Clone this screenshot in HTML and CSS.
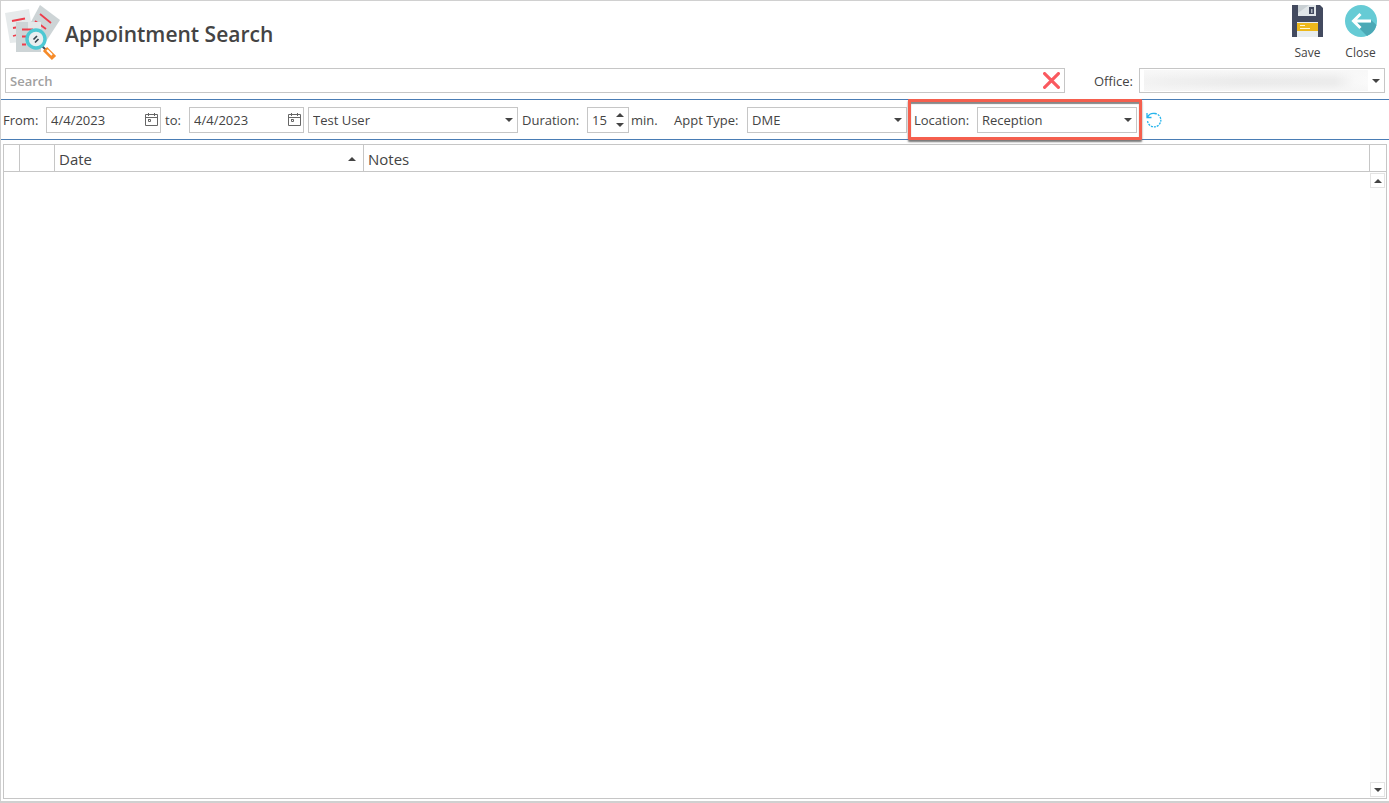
FILE: index.html
```html
<!DOCTYPE html>
<html lang="en">
<head>
<meta charset="utf-8">
<title>Appointment Search</title>
<link rel="stylesheet" href="styles.css">
</head>
<body>
<main class="window">
  <header class="header">
    <svg class="logo" viewBox="0 0 56 56" aria-hidden="true">
      <path fill="#e6eaeb" d="M0 8 24 4 29 36 5 38Z"/>
      <path fill="#cdd4d6" d="M35 0 55 15 38 41 20 28Z"/>
      <g stroke="#ee3d4b" stroke-width="1.8" fill="none">
        <path d="M7 16 20 13.500M8 23 14 22M8 31 12 30M35 9 46 18M30 16 41 24"/>
      </g>
      <path fill="#cdd4d6" d="M11 17H36V47H11Z"/>
      <path fill="#e3e7e8" d="M23 17H36V30H23Z"/>
      <path stroke="#ee3d4b" stroke-width="1.8" d="M17 24.500H28M17 31.500H23M17 39.500H21"/>
      <path stroke="#47525c" stroke-width="2" d="M37 41 42 46"/>
      <path stroke="#f68b29" stroke-width="6" d="M40 44 49 53"/>
      <path stroke="#fff" stroke-width="2" d="M42 45 47 50"/>
      <circle cx="31" cy="34" r="9" fill="#e9eff0" stroke="#4dc8d3" stroke-width="3.4"/>
      <path stroke="#35434d" stroke-width="1.7" d="M28.500 34.500 32 31M30 37.500 33.500 34"/>
    </svg>
    <h1 class="title">Appointment Search</h1>
    <button class="tool" type="button">
      <svg class="tool-icon" viewBox="0 0 32 32" aria-hidden="true">
        <path fill="#434a5f" d="M0 0H28L31 3V32H0Z"/>
        <path fill="#e1e6e9" d="M6 0H24V11H6Z"/>
        <path fill="#c9d0d4" d="M6 0H17L6 8Z"/>
        <path fill="#434a5f" d="M17 2H22V9H17Z"/>
        <path fill="#aeb6bf" d="M19 4H20.500V8H19Z"/>
        <path fill="#e8edef" d="M5 17H26V32H5Z"/>
        <path fill="#edb81b" d="M5 18H26V26H5Z"/>
        <path stroke="#fff7d5" d="M8 20.500H13M8 23.500H18"/>
      </svg>
      <span>Save</span>
    </button>
    <button class="tool" type="button">
      <svg class="tool-icon" viewBox="0 0 32 32" aria-hidden="true">
        <circle cx="16" cy="16" r="16" fill="#66cbd5"/>
        <path fill="#4ba9b6" d="M14 23 22 31A16 16 0 0 0 31.500 20L26 15 25 17.500H12Z"/>
        <path fill="none" stroke="#fff" stroke-width="3" d="M26 16H9M15.500 9 8.500 16 15.500 23"/>
      </svg>
      <span>Close</span>
    </button>
  </header>

  <div class="search-row">
    <div class="field search">
      <input class="text search-text" type="text" placeholder="Search" aria-label="Search">
      <button class="icon-button clear" type="button" aria-label="Clear search">
        <svg class="clear-icon" viewBox="0 0 16 16"><path d="M1.500 1.500 14.500 14.500M14.500 1.500 1.500 14.500" stroke="#fa595f" stroke-width="3" stroke-linecap="round"/></svg>
      </button>
    </div>
    <label class="office-label" for="office">Office:</label>
    <div class="field combo office">
      <select class="select" id="office"><option></option></select>
      <span class="redacted"></span>
    </div>
  </div>

  <div class="filters">
    <label class="from-label" for="from">From:</label>
    <div class="field date">
      <input class="text" id="from" type="text" value="4/4/2023">
      <button class="icon-button" type="button" aria-label="Pick start date">
        <svg class="calendar" viewBox="0 0 13 13"><path fill="none" stroke="#666" d="M.5 1.500H12.500V12.500H.5ZM1 4.500H12M3.500 0V3M9.500 0V3M3 6.500H5.500V8.500H3.500V7"/></svg>
      </button>
    </div>
    <label class="to-label" for="to">to:</label>
    <div class="field date">
      <input class="text" id="to" type="text" value="4/4/2023">
      <button class="icon-button" type="button" aria-label="Pick end date">
        <svg class="calendar" viewBox="0 0 13 13"><path fill="none" stroke="#666" d="M.5 1.500H12.500V12.500H.5ZM1 4.500H12M3.500 0V3M9.500 0V3M3 6.500H5.500V8.500H3.500V7"/></svg>
      </button>
    </div>
    <div class="field combo user">
      <select class="select" aria-label="User"><option>Test User</option></select>
    </div>
    <label class="duration-label" for="duration">Duration:</label>
    <div class="field spin">
      <input class="text" id="duration" type="text" value="15">
      <div class="steps">
        <button class="step up" type="button" aria-label="Increase"></button>
        <button class="step down" type="button" aria-label="Decrease"></button>
      </div>
    </div>
    <span class="unit">min.</span>
    <label class="type-label" for="type">Appt Type:</label>
    <div class="field combo type">
      <select class="select" id="type"><option>DME</option></select>
    </div>
    <div class="location">
      <label class="location-label" for="location">Location:</label>
      <div class="field combo type">
        <select class="select" id="location"><option>Reception</option></select>
      </div>
    </div>
    <button class="icon-button refresh-button" type="button" aria-label="Refresh">
      <svg class="refresh" viewBox="0 0 16 16"><g fill="none" stroke="#25b4ec" stroke-width="1.300"><path d="M1 1V5.500H5.500M1.500 5A7 7 0 0 1 9 1.500"/><path stroke-dasharray="2 1" d="M9 1.500A6.700 6.700 0 1 1 1.500 9"/></g></svg>
    </button>
  </div>

  <section class="results">
    <table class="grid">
      <thead>
        <tr>
          <th class="col-marker"></th>
          <th class="col-icon"></th>
          <th class="col-date" aria-sort="ascending"><div class="sortable">Date<span class="up"></span></div></th>
          <th>Notes</th>
          <th class="col-scroll"></th>
        </tr>
      </thead>
    </table>
    <div class="scrollbar">
      <button class="scroll-button up" type="button" aria-label="Scroll up"></button>
      <button class="scroll-button down" type="button" aria-label="Scroll down"></button>
    </div>
  </section>
</main>
</body>
</html>
```

FILE: styles.css
```css
* { box-sizing: border-box; }

body {
  margin: 0;
  background: #fff;
  color: #444;
  font: 13px/20px "Open Sans", "Noto Sans", sans-serif;
}

button, input, select {
  margin: 0;
  padding: 0;
  border: 0;
  background: none;
  color: inherit;
  font: inherit;
}

svg { display: block; }

.window {
  display: flex;
  flex-direction: column;
  height: 100vh;
  border: 1px solid #d0d0d0;
  border-width: 1px 0 2px 1px;
}

.header {
  display: flex;
  align-items: flex-start;
  height: 67px;
  padding: 4px 2px 0 4px;
}

.logo { width: 56px; height: 56px; }

.title {
  flex: 1;
  margin: 14px 0 0 4px;
  font-size: 21px;
  line-height: 30px;
  font-weight: 600;
}

.tool {
  display: flex;
  flex-direction: column;
  align-items: center;
  gap: 6px;
  width: 53px;
  font-size: 12px;
}

.tool-icon { width: 32px; height: 32px; }

.search-row {
  display: flex;
  align-items: center;
  padding: 0 4px;
}

.field {
  display: flex;
  align-items: center;
  height: 26px;
  border: 1px solid #c6c6c6;
  background: #fff;
}

.text {
  flex: 1;
  min-width: 0;
  height: 24px;
  padding-left: 4px;
}

.search { flex: 1; height: 25px; }
.search-text { font-weight: 600; }
.search-text::placeholder { color: #a0a0a0; opacity: 1; }
.icon-button { padding: 0 2px; }
.clear { padding: 0 4px; }
.clear-icon { width: 17px; height: 17px; }
.office-label { width: 74px; padding-right: 6px; text-align: right; }
.office { width: 246px; height: 25px; }

.combo { position: relative; }

.select {
  width: 100%;
  height: 24px;
  padding: 0 20px 0 4px;
  appearance: none;
}

.combo::after {
  content: "";
  position: absolute;
  top: 10px;
  right: 4px;
  border: 4px solid transparent;
  border-top-color: #444;
  border-bottom: 0;
  pointer-events: none;
}

.redacted {
  position: absolute;
  inset: 1px 16px 1px 4px;
  background:
    linear-gradient(#f8f8f8, transparent 45%, transparent 65%, #f6f6f6),
    linear-gradient(90deg, #f3f3f3, #f0f0f0 12%, #ebebeb 45%, #ececec 85%, #f8f8f8 94%, #fafafa);
  pointer-events: none;
}

.filters {
  display: flex;
  align-items: center;
  height: 41px;
  margin-top: 6px;
  padding-left: 2px;
  border: 1px solid #4a7db5;
  border-width: 1px 0;
}

.from-label { width: 43px; }
.date { width: 115px; }
.calendar { width: 13px; height: 13px; }
.to-label { width: 28px; padding-left: 4px; }
.user { width: 210px; margin-left: 4px; }
.duration-label { width: 69px; padding-left: 4px; }
.spin { width: 42px; }
.steps { display: flex; flex-direction: column; gap: 6px; margin-right: 4px; }
.step { width: 8px; height: 4px; display: grid; }
.unit { width: 45px; padding-left: 2px; }
.type-label { width: 73px; }
.type { width: 160px; }

.up::after, .down::after {
  content: "";
  display: block;
  width: 0;
  border: 4px solid transparent;
}
.up::after { border-bottom-color: #444; border-top: 0; }
.down::after { border-top-color: #444; border-bottom: 0; }

.location {
  position: relative;
  display: flex;
  align-items: center;
  height: 39px;
  padding: 0 6px 0 7px;
}

.location::after {
  content: "";
  position: absolute;
  inset: -1px 1px;
  border: 3px solid #f55f4e;
  border-radius: 1px;
  box-shadow: 0 2px 2px #777, inset 0 2px 1px #888;
  pointer-events: none;
}

.location-label { width: 63px; }
.refresh-button { padding-left: 3px; }
.refresh { width: 16px; height: 16px; }

.results {
  flex: 1;
  display: flex;
  flex-direction: column;
  margin: 4px 2px 2px;
  border: 1px solid #c6c6c6;
}

.grid {
  width: 100%;
  table-layout: fixed;
  border-collapse: separate;
  border-spacing: 0;
  font-size: 15px;
}

.grid th {
  height: 27px;
  padding: 2px 4px 0;
  border: 1px solid #c6c6c6;
  border-width: 0 1px 1px 0;
  font-weight: 400;
  text-align: left;
}

.grid th:last-child { border-right: 0; }
.grid .col-marker { width: 16px; }
.grid .col-icon { width: 35px; }
.grid .col-date { width: 309px; }
.grid .col-scroll { width: 16px; }
.sortable { display: flex; align-items: center; justify-content: space-between; padding-right: 3px; }

.scrollbar {
  flex: 1;
  display: flex;
  flex-direction: column;
  justify-content: space-between;
  align-self: flex-end;
  width: 16px;
  padding: 1px 1px 1px 0;
  background: #fdfdfd;
}

.scroll-button {
  display: grid;
  place-items: center;
  height: 15px;
  border: 1px solid #e3e3e3;
  background: #fff;
}
```
